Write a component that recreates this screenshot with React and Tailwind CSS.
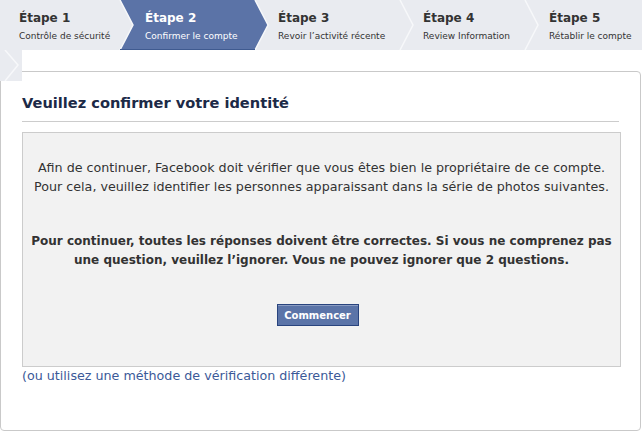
const steps = [
  { title: 'Étape 1', sub: 'Contrôle de sécurité' },
  { title: 'Étape 2', sub: 'Confirmer le compte', active: true },
  { title: 'Étape 3', sub: 'Revoir l’activité récente' },
  { title: 'Étape 4', sub: 'Review Information' },
  { title: 'Étape 5', sub: 'Rétablir le compte' },
]

const widths = ['pl-[19px] w-[145px]', 'w-[133px]', 'w-[145px]', 'w-[126px]', 'flex-1']

function StepBar() {
  return (
    <div className="relative h-[50px] w-full bg-[#e9ebf0]">
      <svg className="absolute inset-0" width="642" height="50" viewBox="0 0 642 50">
        <polygon points="120,0 255,0 268,25 255,50 120,50 133,25" fill="#5b73a7" />
        <polyline points="120,0 133,25 120,50" fill="none" stroke="#f7f8fa" strokeWidth="1.5" />
        <polyline points="255,0 268,25 255,50" fill="none" stroke="#f7f8fa" strokeWidth="1.5" />
        <line x1="120" y1="49.5" x2="255" y2="49.5" stroke="#3f5a90" />
        <polyline points="400,0 413,25 400,50" fill="none" stroke="#f7f8fa" strokeWidth="1.5" />
        <polyline points="525,0 538,25 525,50" fill="none" stroke="#f7f8fa" strokeWidth="1.5" />
      </svg>
      <div className="relative flex h-full">
        {steps.map((s, i) => (
          <div key={s.title} className={'flex flex-col pt-[10px] ' + widths[i]}>
            <span className={'text-[12px] font-bold leading-[17px] ' + (s.active ? 'text-white' : 'text-[#333]')}>
              {s.title}
            </span>
            <span className={'mt-[3px] text-[9px] leading-[13px] whitespace-nowrap ' + (s.active ? 'text-white' : 'text-[#333]')}>
              {s.sub}
            </span>
          </div>
        ))}
      </div>
    </div>
  )
}

export default function App() {
  return (
    <div className="relative h-[431px] w-[642px] overflow-hidden bg-white font-['DejaVu_Sans',sans-serif] text-[#333]">
      <StepBar />

      <div className="mt-[21px] h-[360px] w-[641px] rounded-[4px] border border-[#c9c9c9] px-[21px] pt-[20px]">
        <h1 className="border-b border-[#cccccc] pb-[7px] text-[14.6px] font-bold leading-[22px] text-[#1c2a47]">
          Veuillez confirmer votre identité
        </h1>

        <div className="mt-[10px] flex h-[235px] w-[599px] flex-col items-center border border-[#cccccc] bg-[#f2f2f2] pt-[25px] text-center">
          <p className="text-[12.7px] leading-[19px] text-[#333]">
            Afin de continuer, Facebook doit vérifier que vous êtes bien le propriétaire de ce compte.
            <br />
            Pour cela, veuillez identifier les personnes apparaissant dans la série de photos suivantes.
          </p>
          <p className="mt-[36px] text-[12px] font-bold leading-[19px] text-[#333]">
            Pour continuer, toutes les réponses doivent être correctes. Si vous ne comprenez pas
            <br />
            une question, veuillez l’ignorer. Vous ne pouvez ignorer que 2 questions.
          </p>
          <button className="mr-[8px] mt-[34px] h-[22px] w-[82px] border border-[#29447e] bg-[#5b74a8] text-[10px] font-bold text-white shadow-[inset_0_1px_0_#8a9cc2]">
            Commencer
          </button>
        </div>

        <a href="#" className="block text-[12.7px] leading-[18px] text-[#3b5998]">
          (ou utilisez une méthode de vérification différente)
        </a>
      </div>

      <svg className="absolute left-0 top-[50px]" width="22" height="31" viewBox="0 0 22 31">
        <rect width="22" height="31" fill="#e9ebf0" />
        <polyline points="5,0 18,15 5,31" fill="none" stroke="#f7f8fa" strokeWidth="1.5" />
      </svg>
    </div>
  )
}
